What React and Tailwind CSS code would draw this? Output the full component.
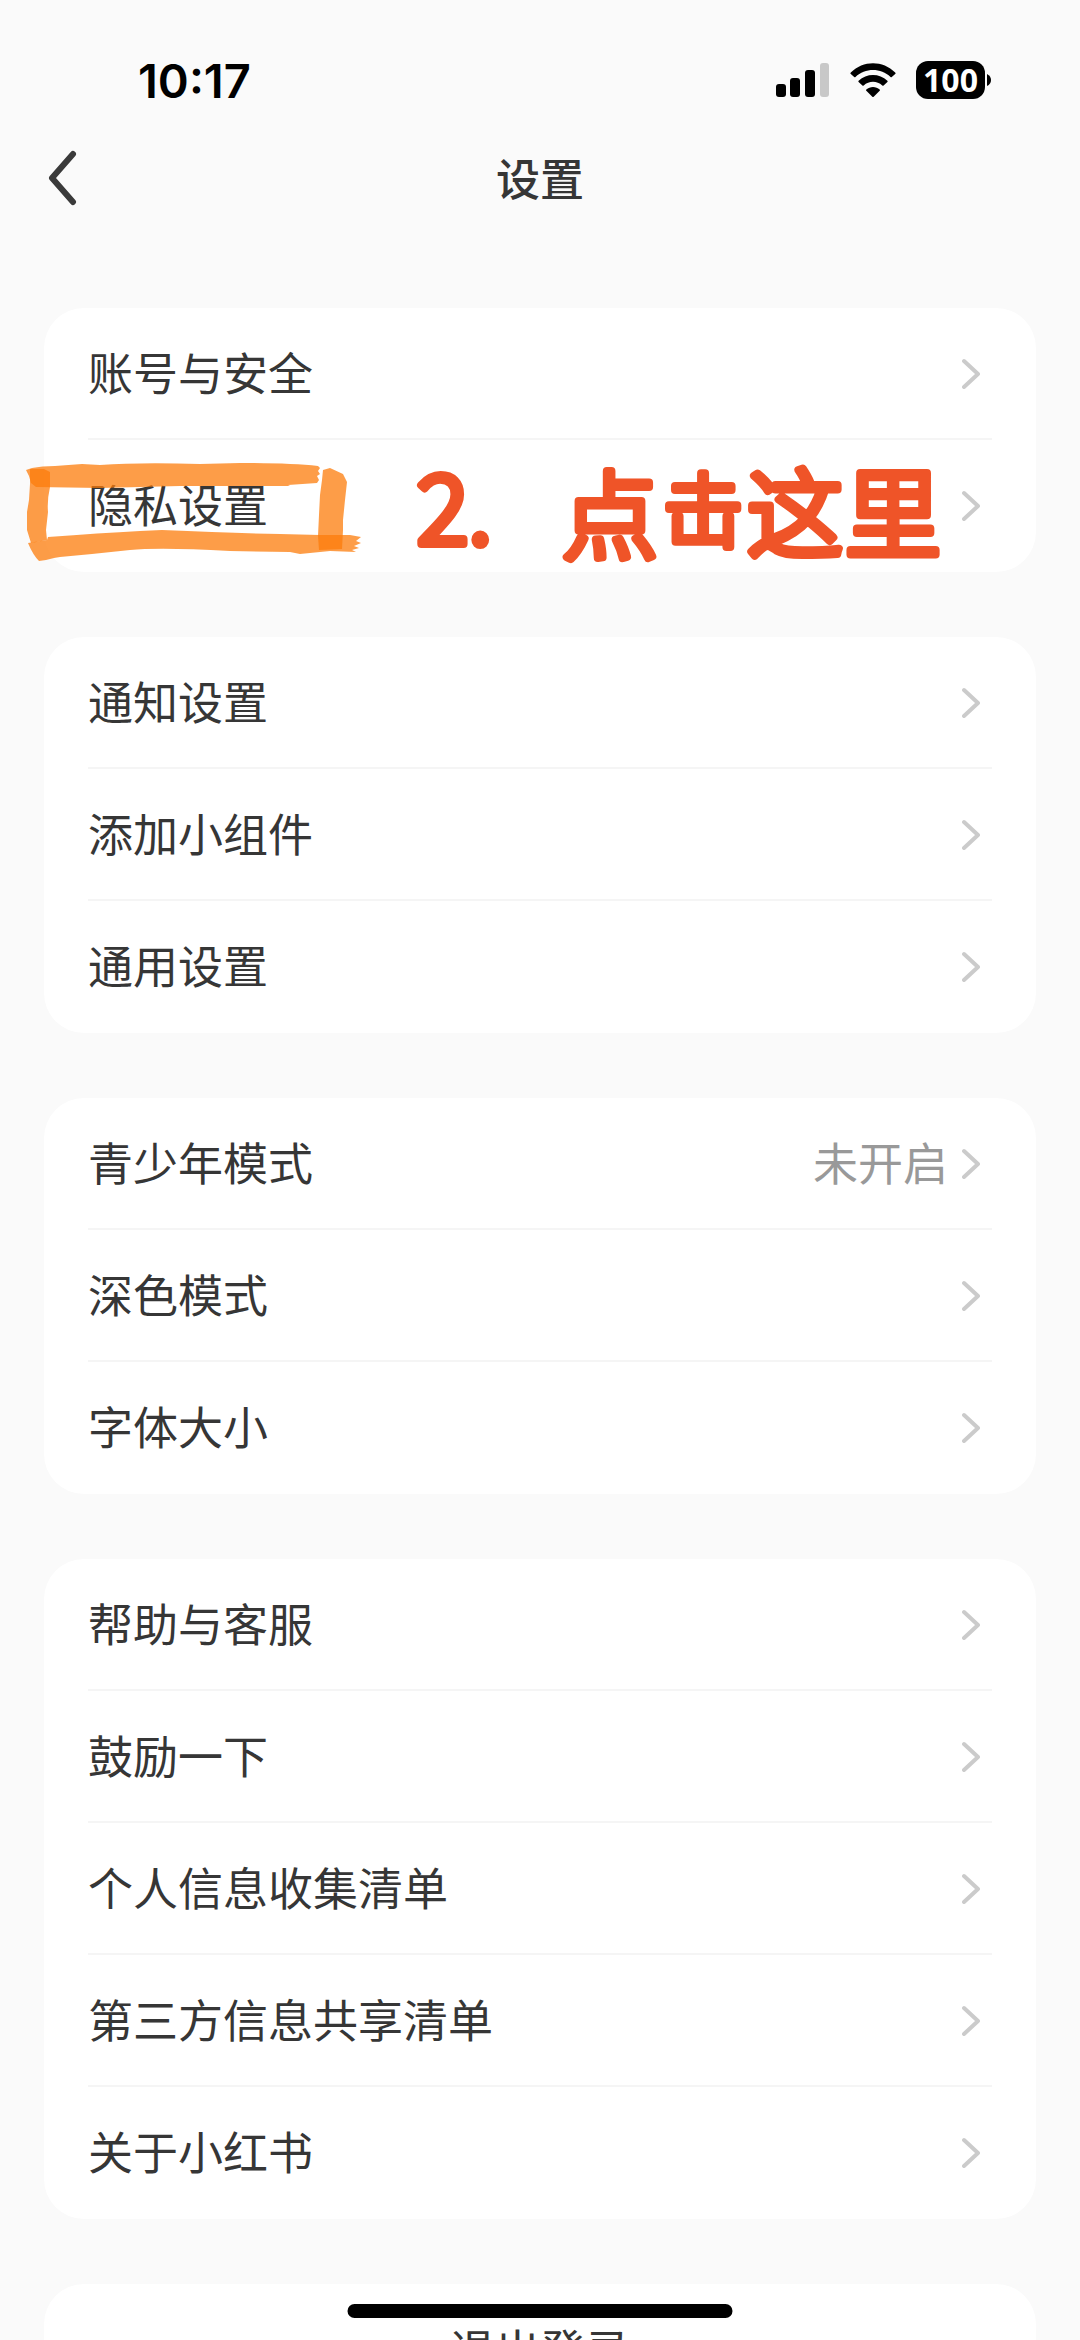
const GROUPS = [
  [{ label: "账号与安全" }, { label: "隐私设置", marked: true }],
  [{ label: "通知设置" }, { label: "添加小组件" }, { label: "通用设置" }],
  [{ label: "青少年模式", value: "未开启" }, { label: "深色模式" }, { label: "字体大小" }],
  [
    { label: "帮助与客服" },
    { label: "鼓励一下" },
    { label: "个人信息收集清单" },
    { label: "第三方信息共享清单" },
    { label: "关于小红书" },
  ],
];

function StatusBar() {
  return (
    <div className="flex h-[120px] items-center justify-between pt-10 pr-[88px] pl-[138px] text-black">
      <span className="font-['Inter',sans-serif] text-[47px] leading-none font-semibold">10:17</span>
      <div className="flex items-center">
        <svg width="54" height="36" viewBox="0 0 54 36" aria-hidden="true">
          <rect x="0" y="22" width="10" height="13" rx="3" />
          <rect x="14" y="16" width="10" height="19" rx="3" />
          <rect x="29" y="8" width="10" height="27" rx="3" />
          <rect x="44" y="1" width="9" height="34" rx="3" fill="#c8c8c8" />
        </svg>
        <svg className="ml-5" width="46" height="36" viewBox="0 0 46 36" aria-hidden="true">
          <path d="M0.8 10.5C13 -2 33 -2 45.2 10.5Q46 11.3 45.2 12.1L41.8 15Q41.2 15.6 40.5 15C31 5.8 15 5.8 5.5 15Q4.8 15.6 4.2 15L0.8 12.1Q0 11.3 0.8 10.5Z" />
          <path d="M8.6 18.7C16.5 11 29.5 11 37.4 18.7Q38 19.4 37.4 20L33.6 23.4Q33 23.9 32.3 23.4C27 18.6 19 18.6 13.7 23.4Q13 23.9 12.4 23.4L8.6 20Q8 19.4 8.6 18.7Z" />
          <path d="M16.3 27.5C20 24 26 24 29.7 27.5Q30.3 28.2 29.7 28.8L23.7 34.7Q23 35.3 22.3 34.7L16.3 28.8Q15.7 28.2 16.3 27.5Z" />
        </svg>
        <div className="ml-5 flex h-[38px] w-[69px] items-center justify-center rounded-xl bg-black font-['Open_Sans',sans-serif] text-[32px] leading-none font-bold text-white">
          100
        </div>
        <svg className="ml-0.5" width="5" height="12" viewBox="0 0 5 12" aria-hidden="true">
          <path d="M0 0Q4 2 4 6Q4 10 0 12Z" />
        </svg>
      </div>
    </div>
  );
}

function Chevron() {
  return (
    <svg className="mr-3" width="18" height="32" viewBox="0 0 18 32" fill="none" aria-hidden="true">
      <path d="M2 4L16 17L2 30" stroke="#cbcbcb" strokeWidth="4" strokeLinecap="round" strokeLinejoin="round" />
    </svg>
  );
}

// marker frame and handwritten hint over the privacy row
function Annotation() {
  return (
    <svg
      className="pointer-events-none absolute top-0 left-0 z-10 overflow-visible"
      width="992"
      height="132"
      viewBox="44 440 992 132"
    >
      <g fill="#fc7c0b" fillOpacity="0.75">
        <path d="M26 470L32 468Q42 466 55 466L82 464L100 465Q140 462 200 464L240 463Q290 463 318 466L320 468L318 471L320 474L317 476L319 480L317 483L288 485L290 486L250 486L180 486L100 488L36 487L31 483L29 476Z" />
        <path d="M30 469L44 469L50 472L50 487Q47 500 48 512L46 530L47 540L31 543L27 530L27 512L29 500L30 484Z" />
        <path d="M28 543L47 540L48 537Q100 533 140 531L162 530Q230 533 280 534L320 535L350 535L361 537L356 541L361 543L354 546L359 548L352 550L356 552L330 551L300 554L290 552L230 551Q160 547 130 550L92 554L60 557L54 558L46 560L39 561Q33 555 28 543Z" />
        <path d="M323 470L330 468L343 474L347 482L345 500L343 520L343 530L342 549L319 550L318 536L319 515L320 495L322 480Z" />
      </g>
      <g
        className="font-['Noto_Sans_CJK_SC',sans-serif] font-light"
        fill="#ef5428"
        stroke="#ef5428"
        strokeWidth="8"
        strokeLinecap="round"
        strokeLinejoin="round"
      >
        <text className="text-[96px]" x="417" y="544">2.</text>
        <text className="text-[96px]">
          <tspan x="562" y="551">点</tspan>
          <tspan className="text-[80px]" x="663" y="540">击</tspan>
          <tspan x="747" y="549">这</tspan>
          <tspan x="845" y="549">里</tspan>
        </text>
      </g>
    </svg>
  );
}

function Row({ label, value, marked }) {
  return (
    <li className="group relative px-11">
      <button className="flex h-[132px] w-full items-center justify-between border-b-2 border-[#f5f5f5] text-left group-last:border-transparent">
        <span className="pb-0.5">{label}</span>
        <span className="flex items-center gap-3.5">
          {value && <span className="pb-0.5 text-[#999999]">{value}</span>}
          <Chevron />
        </span>
      </button>
      {marked && <Annotation />}
    </li>
  );
}

export default function App() {
  return (
    <div className="relative flex h-screen flex-col overflow-hidden bg-[#fafafa] font-['Noto_Sans_CJK_SC',sans-serif] text-[45px] leading-[60px] text-[#363636]">
      <StatusBar />

      <header className="grid h-[120px] shrink-0 grid-cols-3 items-center px-11">
        <button aria-label="返回" className="justify-self-start">
          <svg width="34" height="60" viewBox="0 0 34 60" fill="none" aria-hidden="true">
            <path d="M29 4L8 28L29 52" stroke="#3a3a3a" strokeWidth="6" strokeLinecap="round" strokeLinejoin="round" />
          </svg>
        </button>
        <h1 className="pb-1.5 text-center text-[44px] font-medium">设置</h1>
      </header>

      <main className="flex min-h-0 flex-1 flex-col gap-[65px] overflow-hidden px-11 pt-[68px]">
        {GROUPS.map((rows) => (
          <ul key={rows[0].label} className="shrink-0 rounded-[40px] bg-white">
            {rows.map((row) => (
              <Row key={row.label} {...row} />
            ))}
          </ul>
        ))}
        <button className="h-[132px] shrink-0 rounded-[40px] bg-white pb-0.5 text-center">退出登录</button>
      </main>

      <div className="absolute bottom-[22px] left-1/2 h-3.5 w-[385px] -translate-x-1/2 rounded-full bg-black" />
    </div>
  );
}
